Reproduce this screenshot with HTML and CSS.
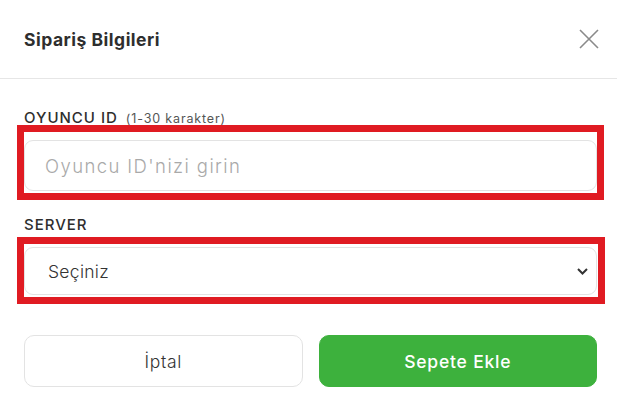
FILE: index.html
```html
<!DOCTYPE html>
<html lang="tr">
<head>
<meta charset="utf-8">
<title>Sipariş Bilgileri</title>
<link rel="stylesheet" href="styles.css">
</head>
<body>
<div class="modal">
  <div class="modal-header">
    <h2 class="modal-title">Sipariş Bilgileri</h2>
    <button class="close-btn" aria-label="Kapat">
      <svg width="20" height="20" viewBox="0 0 20 20"><path d="M1 1L19 19M19 1L1 19" stroke="#8a8a8a" stroke-width="1.6" fill="none"/></svg>
    </button>
  </div>
  <div class="modal-body">
    <div class="field">
      <label class="field-label">OYUNCU ID<span class="hint">(1-30 karakter)</span></label>
      <div class="control-wrap mark-1">
        <input class="text-input" type="text" placeholder="Oyuncu ID'nizi girin">
      </div>
    </div>
    <div class="field field-server">
      <label class="field-label">SERVER</label>
      <div class="control-wrap mark-2">
        <div class="select">
          <span class="select-value">Seçiniz</span>
          <svg class="chevron" width="11" height="7" viewBox="0 0 11 7"><path d="M1 1L5.5 5.5L10 1" stroke="#333" stroke-width="2" fill="none"/></svg>
        </div>
      </div>
    </div>
    <div class="actions">
      <button class="btn btn-cancel">İptal</button>
      <button class="btn btn-primary">Sepete Ekle</button>
    </div>
  </div>
</div>
</body>
</html>
```
FILE: styles.css
```css
* { box-sizing: border-box; }
html, body { margin: 0; padding: 0; background: #fff; }
body {
  font-family: "Inter", "Noto Sans", sans-serif;
  color: #333;
  width: 617px;
  height: 407px;
  overflow: hidden;
}
.modal { width: 617px; }
.modal-header {
  height: 79px;
  display: flex;
  align-items: center;
  justify-content: space-between;
  padding: 0 18px 0 24px;
  border-bottom: 1px solid #e6e6e6;
}
.modal-title {
  margin: 0;
  font-size: 17.5px;
  font-weight: 700;
  color: #2e2e2e;
  letter-spacing: 0.5px;
}
.close-btn {
  border: 0;
  background: none;
  padding: 0;
  width: 20px;
  height: 20px;
  display: flex;
}
.modal-body {
  padding: 29px 20px 0 24px;
}
.field-label {
  display: block;
  height: 20px;
  line-height: 20px;
  font-size: 15px;
  font-weight: 500;
  color: #2e2e2e;
  margin-bottom: 12px;
  letter-spacing: 1px;
}
.hint {
  font-size: 12.5px;
  color: #555;
  margin-left: 8px;
  font-weight: 400;
  letter-spacing: 0.85px;
}
.control-wrap { position: relative; }
.control-wrap::after {
  content: "";
  position: absolute;
  border: 7px solid #e01b22;
  pointer-events: none;
}
.mark-1::after { left: -7px; top: -15px; right: -7px; bottom: -9px; }
.mark-2::after { left: -7px; top: -10px; right: -8px; bottom: -9px; }
.text-input {
  display: block;
  width: 100%;
  height: 51px;
  border: 1px solid #e3e3e3;
  border-radius: 9px;
  padding: 0 20px;
  font-family: inherit;
  font-size: 18.5px;
  font-weight: 300;
  letter-spacing: 1.4px;
  color: #333;
  background: #fff;
  outline: none;
}
.text-input::placeholder { color: #a9a9a9; }
.field-server { margin-top: 24px; }
.select {
  height: 48px;
  border: 1px solid #e3e3e3;
  border-radius: 9px;
  display: flex;
  align-items: center;
  justify-content: space-between;
  padding: 0 8px 0 23px;
  font-size: 17.5px;
  font-weight: 300;
  letter-spacing: 0.3px;
  color: #333;
}
.actions {
  display: grid;
  grid-template-columns: 1fr 1fr;
  gap: 16px;
  margin-top: 40px;
}
.btn {
  height: 52px;
  border-radius: 10px;
  font-family: inherit;
  font-size: 17.5px;
}
.btn-cancel {
  background: #fff;
  border: 1px solid #e3e3e3;
  color: #333;
  font-weight: 300;
  letter-spacing: 0.7px;
}
.btn-primary {
  background: #3db13d;
  border: 1px solid #3db13d;
  color: #fff;
  font-weight: 500;
  letter-spacing: 0.8px;
}
```
